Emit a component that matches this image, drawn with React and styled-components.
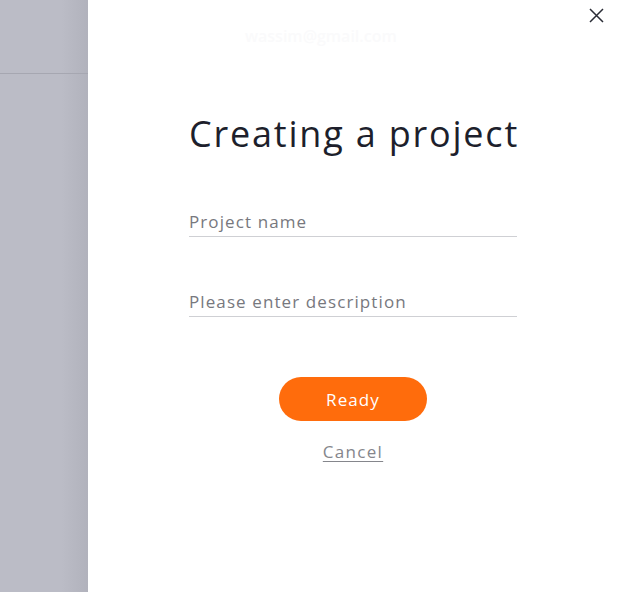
import styled, { createGlobalStyle } from "styled-components";

const GlobalStyle = createGlobalStyle`
  * {
    box-sizing: border-box;
    margin: 0;
    padding: 0;
  }

  body {
    width: 618px;
    height: 592px;
    overflow: hidden;
    font-family: "Open Sans", "DejaVu Sans", sans-serif;
  }
`;

const App = () => {
  return (
    <Screen>
      <GlobalStyle />
      <Backdrop>
        <BackdropHeader />
      </Backdrop>

      <Drawer>
        <TopBar>
          <Email>wassim@gmail.com</Email>
          <CloseButton aria-label="Close">
            <svg width="15" height="15" viewBox="0 0 15 15">
              <path d="M1 1 L14 14 M14 1 L1 14" stroke="#2a2c36" strokeWidth="1.5" fill="none" />
            </svg>
          </CloseButton>
        </TopBar>

        <Form>
          <Title>Creating a project</Title>
          <Field placeholder="Project name" />
          <Field placeholder="Please enter description" />
          <Actions>
            <ReadyButton>Ready</ReadyButton>
            <CancelLink>Cancel</CancelLink>
          </Actions>
        </Form>
      </Drawer>
    </Screen>
  );
};

const Screen = styled.div`
  display: flex;
  width: 618px;
  height: 592px;
`;

const Backdrop = styled.div`
  width: 88px;
  height: 100%;
  background: linear-gradient(90deg, #bbbcc6 0%, #bbbcc6 70%, #b1b2bc 100%);
`;

const BackdropHeader = styled.div`
  height: 74px;
  border-bottom: 1px solid #a6a7b1;
`;

const Drawer = styled.div`
  flex: 1;
  height: 100%;
  background: #fff;
  display: flex;
  flex-direction: column;
  align-items: center;
`;

const TopBar = styled.div`
  width: 100%;
  height: 70px;
  display: flex;
  align-items: flex-start;
  justify-content: space-between;
  padding: 7px 14px 0 157px;
`;

const Email = styled.span`
  margin-top: 18px;
  font-size: 16px;
  font-weight: 600;
  color: #fafafb;
`;

const CloseButton = styled.button`
  border: none;
  background: none;
  width: 16px;
  height: 16px;
  display: flex;
  align-items: center;
  justify-content: center;
  cursor: pointer;
`;

const Form = styled.div`
  width: 328px;
  display: flex;
  flex-direction: column;
  margin-top: 40px;
`;

const Title = styled.h1`
  font-size: 36px;
  font-weight: 400;
  letter-spacing: 1.8px;
  line-height: 48px;
  color: #1d1f2c;
  margin-bottom: 52px;
  white-space: nowrap;
`;

const Field = styled.input`
  width: 100%;
  border: none;
  border-bottom: 1px solid #cfd0d4;
  outline: none;
  font-family: inherit;
  font-size: 17px;
  letter-spacing: 1.1px;
  padding: 0 0 3px;
  margin-bottom: 53px;
  color: #333;

  &::placeholder {
    color: #77787e;
  }
`;

const Actions = styled.div`
  display: flex;
  flex-direction: column;
  align-items: center;
  gap: 19px;
  margin-top: 7px;
`;

const ReadyButton = styled.button`
  width: 148px;
  height: 44px;
  border: none;
  border-radius: 22px;
  background: #ff6c0c;
  color: #fff;
  font-family: inherit;
  font-size: 17px;
  font-weight: 500;
  letter-spacing: 1.1px;
  cursor: pointer;
`;

const CancelLink = styled.a`
  font-size: 17px;
  letter-spacing: 1.3px;
  color: #85868c;
  text-decoration: underline;
  text-underline-offset: 3px;
  cursor: pointer;
`;

export default App;
